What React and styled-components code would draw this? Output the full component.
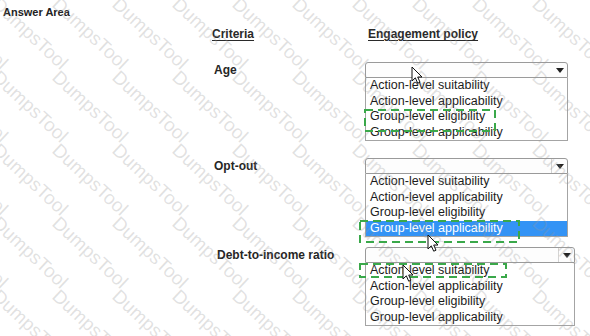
import styled, { createGlobalStyle } from "styled-components";

const GlobalStyle = createGlobalStyle`
    html, body {
        margin: 0;
        padding: 0;
        background: #ffffff;
    }
    body {
        font-family: "Liberation Sans", Arial, sans-serif;
        color: #1f1f1f;
    }
`;

const Page = styled.div`
    position: relative;
    width: 590px;
    height: 336px;
    overflow: hidden;
    background: #ffffff;
`;

const Title = styled.div`
    padding: 5px 0 0 3px;
    font-size: 11px;
    line-height: 14px;
    font-weight: bold;
    color: #222;
`;

const Table = styled.div`
    margin-left: 212px;
    display: flex;
    flex-direction: column;
`;

const HeaderRow = styled.div`
    display: flex;
    margin-top: 8px;
`;

const HeaderCell = styled.div`
    width: ${(p) => p.$width || "auto"};
    padding-left: ${(p) => p.$indent || 0}px;
    font-size: 12px;
    line-height: 14px;
    font-weight: bold;
    color: #2a2a2a;
    text-decoration: underline;
    text-underline-offset: 2px;
`;

const Row = styled.div`
    display: flex;
    align-items: flex-start;
    margin-top: ${(p) => p.$gap}px;
`;

const Label = styled.div`
    width: ${(p) => 153 - p.$indent}px;
    padding-left: ${(p) => p.$indent}px;
    font-size: 12px;
    line-height: 16px;
    font-weight: bold;
    color: #262626;
`;

const Dropdown = styled.div`
    position: relative;
    width: ${(p) => p.$width}px;
`;

const SelectBox = styled.div`
    display: flex;
    justify-content: flex-end;
    height: 16px;
    box-sizing: border-box;
    border: 1px solid #9a9a9a;
    border-radius: 3px 3px 0 0;
    background: #fdfdfd;
`;

const ArrowCell = styled.div`
    width: 15px;
    display: flex;
    align-items: center;
    justify-content: center;
    border-left: 1px solid ${(p) => (p.$divider ? "#d4d4d4" : "transparent")};
`;

const Arrow = styled.span`
    width: 0;
    height: 0;
    border-left: 4px solid transparent;
    border-right: 4px solid transparent;
    border-top: 5px solid #222;
`;

const OptionList = styled.div`
    border: 1px solid #a4a4a4;
    border-top: none;
    background: #ffffff;
`;

const Option = styled.div`
    height: 15.5px;
    line-height: 15.5px;
    padding-left: 4px;
    font-size: 12.5px;
    white-space: nowrap;
    color: ${(p) => (p.$selected ? "#ffffff" : "#1c1c1c")};
    background: ${(p) => (p.$selected ? "#3393f5" : "transparent")};
`;

const Marker = styled.svg`
    position: absolute;
    left: ${(p) => p.$x}px;
    top: ${(p) => p.$y}px;
    pointer-events: none;
    z-index: 3;
`;

const Watermark = styled.div`
    position: absolute;
    top: -6px;
    left: -58px;
    display: grid;
    grid-template-columns: repeat(11, 60px);
    grid-auto-rows: 73px;
    pointer-events: none;
    z-index: 2;
`;

const Mark = styled.span`
    display: block;
    width: 0;
    height: 0;
    overflow: visible;

    span {
        display: block;
        transform: rotate(43deg);
        transform-origin: 0 0;
        font-size: 19px;
        line-height: 19px;
        white-space: nowrap;
        color: rgba(150, 150, 150, 0.28);
    }
`;

const options = [
    "Action-level suitability",
    "Action-level applicability",
    "Group-level eligibility",
    "Group-level applicability",
];

const rows = [
    {
        label: "Age",
        gap: 21,
        indent: 2,
        width: 203,
        divider: false,
        selected: -1,
        box: { x: -1, y: 47, w: 132, h: 23 },
        cursor: { x: 46, y: 4 },
    },
    {
        label: "Opt-out",
        gap: 17,
        indent: 2,
        width: 203,
        divider: true,
        selected: 3,
        box: { x: -6, y: 62, w: 161, h: 23 },
        cursor: { x: 62, y: 76 },
    },
    {
        label: "Debt-to-income ratio",
        gap: 10,
        indent: 5,
        width: 210,
        divider: true,
        selected: -1,
        box: { x: -6, y: 16, w: 148, h: 15 },
        cursor: { x: 37, y: 17 },
    },
];

function DashedBox({ box }) {
    return (
        <Marker $x={box.x} $y={box.y} width={box.w} height={box.h}>
            <rect
                x="1"
                y="1"
                width={box.w - 2}
                height={box.h - 2}
                fill="none"
                stroke="#3aa84a"
                strokeWidth="2"
                strokeDasharray="8 5"
            />
        </Marker>
    );
}

function Cursor({ pos }) {
    return (
        <Marker $x={pos.x} $y={pos.y} width="13" height="19">
            <path
                d="M1 1 L1 15 L4.3 11.8 L6.7 17.2 L9 16.2 L6.7 11 L11 11 Z"
                fill="#ffffff"
                stroke="#111"
                strokeWidth="1"
                strokeLinejoin="round"
            />
        </Marker>
    );
}

function App() {
    const marks = Array.from({ length: 11 * 5 });

    return (
        <Page>
            <GlobalStyle />
            <Title>Answer Area</Title>
            <Table>
                <HeaderRow>
                    <HeaderCell $width="153px">Criteria</HeaderCell>
                    <HeaderCell $indent={3}>Engagement policy</HeaderCell>
                </HeaderRow>
                {rows.map((row) => (
                    <Row key={row.label} $gap={row.gap}>
                        <Label $indent={row.indent}>{row.label}</Label>
                        <Dropdown $width={row.width}>
                            <SelectBox>
                                <ArrowCell $divider={row.divider}>
                                    <Arrow />
                                </ArrowCell>
                            </SelectBox>
                            <OptionList>
                                {options.map((opt, i) => (
                                    <Option key={opt} $selected={i === row.selected}>
                                        {opt}
                                    </Option>
                                ))}
                            </OptionList>
                            <DashedBox box={row.box} />
                            <Cursor pos={row.cursor} />
                        </Dropdown>
                    </Row>
                ))}
            </Table>
            <Watermark>
                {marks.map((_, i) => (
                    <Mark key={i}>
                        <span>DumpsTool</span>
                    </Mark>
                ))}
            </Watermark>
        </Page>
    );
}

export default App;
